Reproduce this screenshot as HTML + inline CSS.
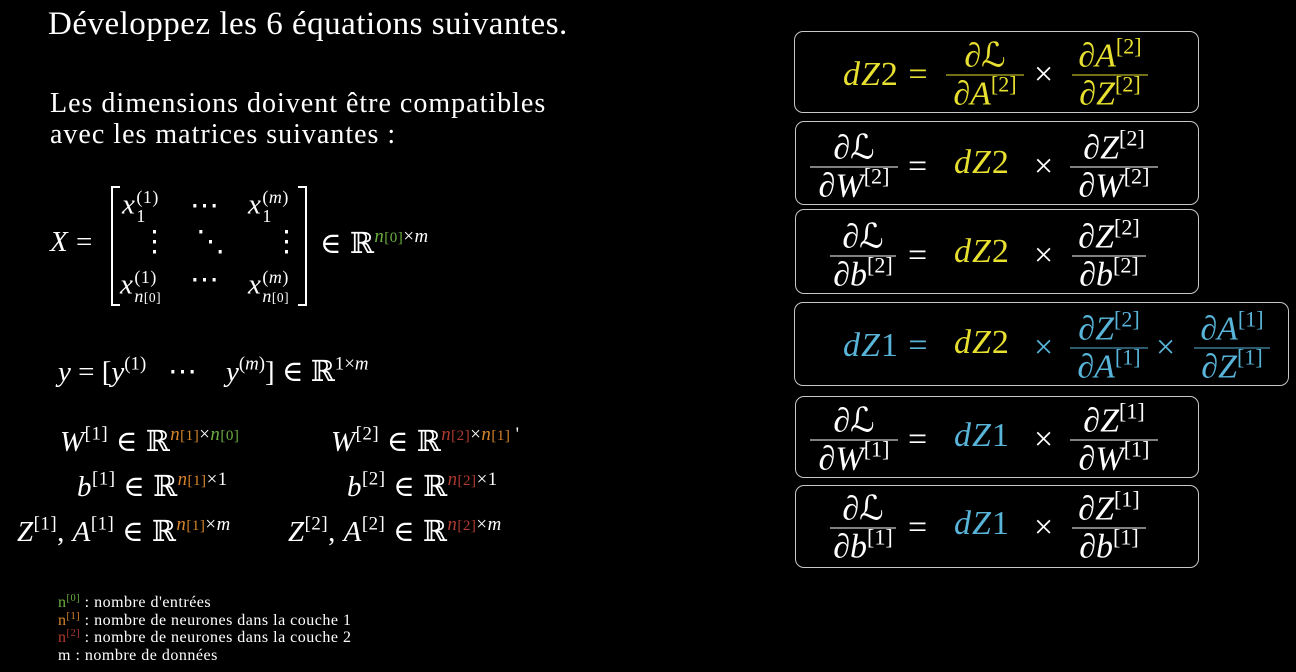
<!DOCTYPE html>
<html><head><meta charset="utf-8"><style>
body{margin:0;width:1296px;height:672px;background:#000;color:#fff;overflow:hidden;position:relative;font-family:"Liberation Serif","DejaVu Serif",serif}
.a{position:absolute;white-space:nowrap;line-height:1}
i{font-style:italic}
sup{font-size:65%;vertical-align:0.6em;line-height:0}
sub{font-size:65%;vertical-align:-0.35em;line-height:0}
.ss{display:inline-flex;flex-direction:column;font-size:62%;line-height:1.05;vertical-align:middle;text-align:left;margin-left:1px}
.box{position:absolute;border:1.5px solid #c8c8c8;border-radius:9px}
.f{position:absolute;display:flex;flex-direction:column;align-items:center;transform:translateY(-50%);font-size:34px;line-height:37px}
.f .b{align-self:stretch;border-top:1.5px solid currentColor}
.t{position:absolute;font-size:34px;line-height:34px;transform:translateY(-50%);white-space:nowrap;letter-spacing:1px}
.Y{color:#e8e030}.B{color:#58b4d8}.G{color:#6cb040}.O{color:#d8862a}.R{color:#b03a30}
.m{font-size:29px;letter-spacing:0.5px}
</style></head><body>
<div class="a" style="left:48px;top:8px;font-size:33px;letter-spacing:0.5px">Développez les 6 équations suivantes.</div>
<div class="a" style="left:50px;top:88px;font-size:28px;line-height:31px;letter-spacing:1px">Les dimensions doivent être compatibles<br>avec les matrices suivantes :</div>

<div class="a m" style="left:50px;top:228px"><i>X</i> =</div>
<svg class="a" style="left:108px;top:184px" width="206" height="124"><path d="M12 3H4V121H12M190 3H198V121H190" stroke="#fff" stroke-width="2" fill="none"/></svg>
<div class="a m" style="left:122px;top:188px"><i>x</i><span class="ss"><span>(1)</span><span>1</span></span></div>
<div class="a m" style="left:190px;top:192px">⋯</div>
<div class="a m" style="left:248px;top:188px"><i>x</i><span class="ss"><span>(<i>m</i>)</span><span>1</span></span></div>
<div class="a m" style="left:140px;top:228px">⋮</div>
<div class="a m" style="left:196px;top:228px">⋱</div>
<div class="a m" style="left:272px;top:228px">⋮</div>
<div class="a m" style="left:120px;top:268px"><i>x</i><span class="ss"><span>(1)</span><span><i>n</i><span style="font-size:75%">[0]</span></span></span></div>
<div class="a m" style="left:190px;top:266px">⋯</div>
<div class="a m" style="left:248px;top:268px"><i>x</i><span class="ss"><span>(<i>m</i>)</span><span><i>n</i><span style="font-size:75%">[0]</span></span></span></div>
<div class="a m" style="left:320px;top:230px">∈ ℝ<sup><i class="G">n</i><span class="G" style="font-size:80%">[0]</span>×<i>m</i></sup></div>

<div class="a m" style="left:58px;top:358px;letter-spacing:0"><i>y</i> = [<i>y</i><sup>(1)</sup> &nbsp; ⋯ &nbsp;&nbsp; <i>y</i><sup>(<i>m</i>)</sup>] ∈ ℝ<sup>1×<i>m</i></sup></div>

<div class="a m" style="left:60px;top:428px"><i>W</i><sup>[1]</sup> ∈ ℝ<sup><i class="O">n</i><span class="O" style="font-size:80%">[1]</span>×<i class="G">n</i><span class="G" style="font-size:80%">[0]</span></sup></div>
<div class="a m" style="left:77px;top:473px"><i>b</i><sup>[1]</sup> ∈ ℝ<sup><i class="O">n</i><span class="O" style="font-size:80%">[1]</span>×1</sup></div>
<div class="a m" style="left:17px;top:518px"><i>Z</i><sup>[1]</sup>, <i>A</i><sup>[1]</sup> ∈ ℝ<sup><i class="O">n</i><span class="O" style="font-size:80%">[1]</span>×<i>m</i></sup></div>
<div class="a m" style="left:331px;top:428px"><i>W</i><sup>[2]</sup> ∈ ℝ<sup><i class="R">n</i><span class="R" style="font-size:80%">[2]</span>×<i class="O">n</i><span class="O" style="font-size:80%">[1]</span> '</sup></div>
<div class="a m" style="left:347px;top:473px"><i>b</i><sup>[2]</sup> ∈ ℝ<sup><i class="R">n</i><span class="R" style="font-size:80%">[2]</span>×1</sup></div>
<div class="a m" style="left:288px;top:518px"><i>Z</i><sup>[2]</sup>, <i>A</i><sup>[2]</sup> ∈ ℝ<sup><i class="R">n</i><span class="R" style="font-size:80%">[2]</span>×<i>m</i></sup></div>

<div class="a" style="left:58px;top:594px;font-size:16px;line-height:17.5px;letter-spacing:0.5px">
<span class="G">n<sup>[0]</sup></span> : nombre d'entrées<br>
<span class="O">n<sup>[1]</sup></span> : nombre de neurones dans la couche 1<br>
<span class="R">n<sup>[2]</sup></span> : nombre de neurones dans la couche 2<br>
m : nombre de données</div>

<div class="box" style="left:794px;top:31px;width:403px;height:80px"></div>
<div class="box" style="left:795px;top:121px;width:402px;height:82px"></div>
<div class="box" style="left:795px;top:209px;width:402px;height:83px"></div>
<div class="box" style="left:794px;top:302px;width:493px;height:82px"></div>
<div class="box" style="left:795px;top:396px;width:402px;height:80px"></div>
<div class="box" style="left:795px;top:485px;width:402px;height:81px"></div>

<div class="t Y" style="left:843px;top:75px"><i>dZ</i>2 =</div>
<div class="f Y" style="left:946px;top:75px;width:78px"><div>∂ℒ</div><div class="b"></div><div>∂<i>A</i><sup>[2]</sup></div></div>
<div class="t" style="left:1034px;top:75px">×</div>
<div class="f Y" style="left:1072px;top:75px;width:76px"><div>∂<i>A</i><sup>[2]</sup></div><div class="b"></div><div>∂<i>Z</i><sup>[2]</sup></div></div>

<div class="f" style="left:810px;top:167px;width:88px"><div>∂ℒ</div><div class="b"></div><div>∂<i>W</i><sup>[2]</sup></div></div>
<div class="t" style="left:908px;top:167px">=</div>
<div class="t Y" style="left:954px;top:163px"><i>dZ</i>2</div>
<div class="t" style="left:1034px;top:167px">×</div>
<div class="f" style="left:1070px;top:167px;width:88px"><div>∂<i>Z</i><sup>[2]</sup></div><div class="b"></div><div>∂<i>W</i><sup>[2]</sup></div></div>

<div class="f" style="left:830px;top:256px;width:66px"><div>∂ℒ</div><div class="b"></div><div>∂<i>b</i><sup>[2]</sup></div></div>
<div class="t" style="left:908px;top:256px">=</div>
<div class="t Y" style="left:954px;top:252px"><i>dZ</i>2</div>
<div class="t" style="left:1034px;top:256px">×</div>
<div class="f" style="left:1072px;top:256px;width:74px"><div>∂<i>Z</i><sup>[2]</sup></div><div class="b"></div><div>∂<i>b</i><sup>[2]</sup></div></div>

<div class="t B" style="left:843px;top:346px"><i>dZ</i>1 =</div>
<div class="t Y" style="left:954px;top:343px"><i>dZ</i>2</div>
<div class="t B" style="left:1034px;top:348px">×</div>
<div class="f B" style="left:1070px;top:348px;width:78px"><div>∂<i>Z</i><sup>[2]</sup></div><div class="b"></div><div>∂<i>A</i><sup>[1]</sup></div></div>
<div class="t B" style="left:1156px;top:348px">×</div>
<div class="f B" style="left:1194px;top:348px;width:76px"><div>∂<i>A</i><sup>[1]</sup></div><div class="b"></div><div>∂<i>Z</i><sup>[1]</sup></div></div>

<div class="f" style="left:810px;top:440px;width:88px"><div>∂ℒ</div><div class="b"></div><div>∂<i>W</i><sup>[1]</sup></div></div>
<div class="t" style="left:908px;top:440px">=</div>
<div class="t B" style="left:954px;top:436px"><i>dZ</i>1</div>
<div class="t" style="left:1034px;top:440px">×</div>
<div class="f" style="left:1070px;top:440px;width:88px"><div>∂<i>Z</i><sup>[1]</sup></div><div class="b"></div><div>∂<i>W</i><sup>[1]</sup></div></div>

<div class="f" style="left:830px;top:528px;width:66px"><div>∂ℒ</div><div class="b"></div><div>∂<i>b</i><sup>[1]</sup></div></div>
<div class="t" style="left:908px;top:528px">=</div>
<div class="t B" style="left:954px;top:524px"><i>dZ</i>1</div>
<div class="t" style="left:1034px;top:528px">×</div>
<div class="f" style="left:1072px;top:528px;width:74px"><div>∂<i>Z</i><sup>[1]</sup></div><div class="b"></div><div>∂<i>b</i><sup>[1]</sup></div></div>
</body></html>
